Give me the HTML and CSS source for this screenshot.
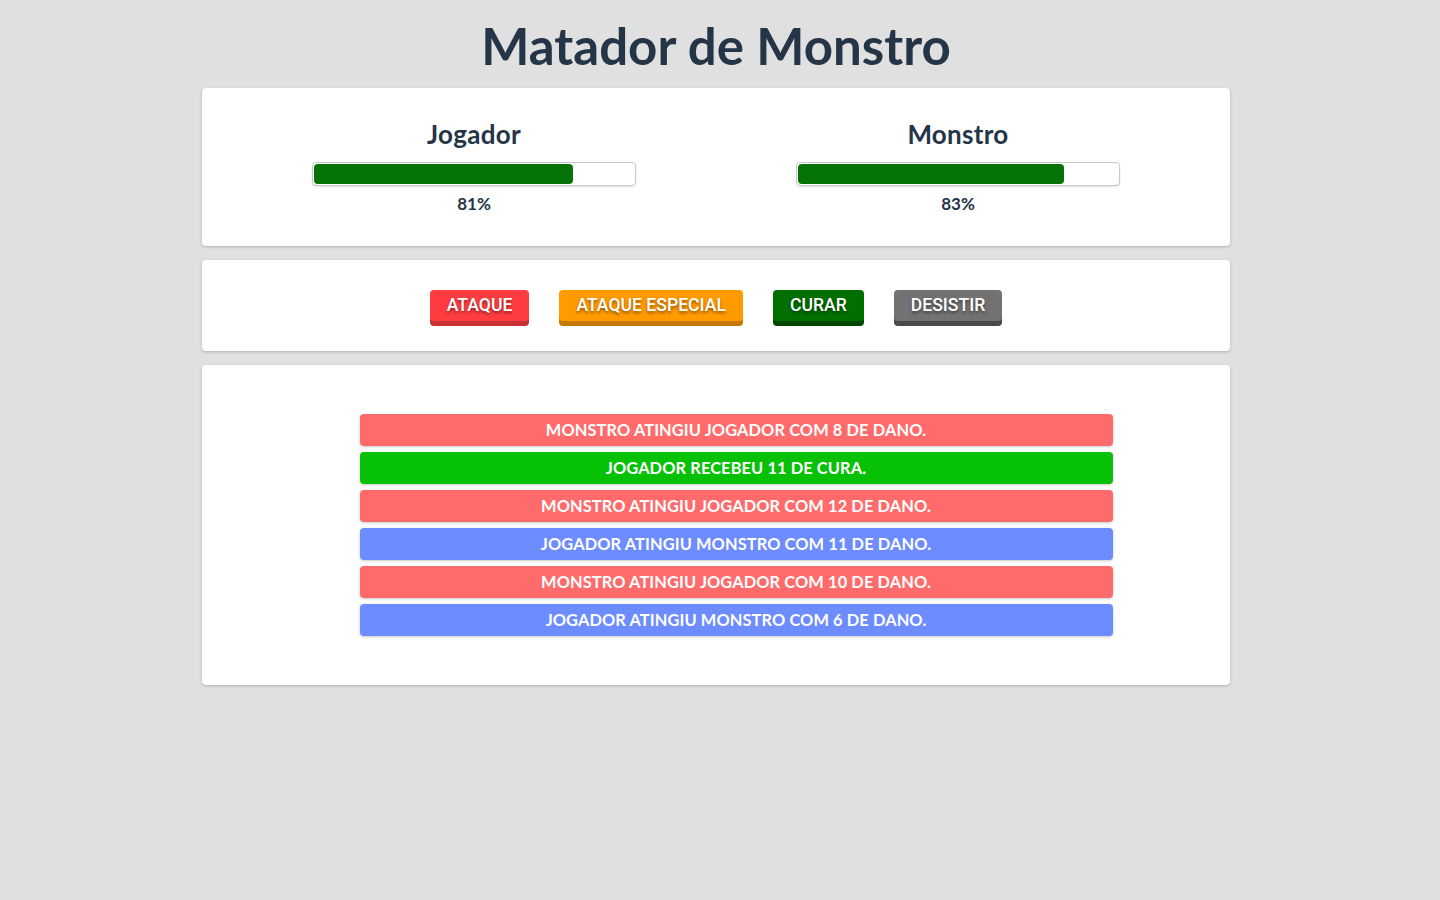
FILE: index.html
```html
<!DOCTYPE html>
<html lang="pt">
<head>
<meta charset="utf-8">
<title>Matador de Monstro</title>
<link rel="stylesheet" href="styles.css">
</head>
<body>
<h1 class="title">Matador de Monstro</h1>

<section class="card scores">
  <div class="score">
    <h2 class="score-name">Jogador</h2>
    <div class="bar"><div class="bar-fill" style="width: 81%"></div></div>
    <p class="score-value">81%</p>
  </div>
  <div class="score">
    <h2 class="score-name">Monstro</h2>
    <div class="bar"><div class="bar-fill" style="width: 83%"></div></div>
    <p class="score-value">83%</p>
  </div>
</section>

<section class="card actions">
  <button class="btn btn-attack">ATAQUE</button>
  <button class="btn btn-special">ATAQUE ESPECIAL</button>
  <button class="btn btn-heal">CURAR</button>
  <button class="btn btn-give-up">DESISTIR</button>
</section>

<section class="card logs">
  <ul class="log-list">
    <li class="log log-monster">MONSTRO ATINGIU JOGADOR COM 8 DE DANO.</li>
    <li class="log log-heal">JOGADOR RECEBEU 11 DE CURA.</li>
    <li class="log log-monster">MONSTRO ATINGIU JOGADOR COM 12 DE DANO.</li>
    <li class="log log-player">JOGADOR ATINGIU MONSTRO COM 11 DE DANO.</li>
    <li class="log log-monster">MONSTRO ATINGIU JOGADOR COM 10 DE DANO.</li>
    <li class="log log-player">JOGADOR ATINGIU MONSTRO COM 6 DE DANO.</li>
  </ul>
</section>
</body>
</html>
```

FILE: styles.css
```css
* { box-sizing: border-box; }

body {
  margin: 0;
  padding-right: 8px;
  background: #e0e0e0;
  font-family: Lato, "Noto Sans", sans-serif;
  color: #253548;
}

.title {
  margin: 18px 0 14px;
  text-align: center;
  font-size: 51px;
  font-weight: 700;
  line-height: 56px;
  color: #253548;
}

.card {
  width: 1028px;
  margin: 0 auto 14px;
  background: #fff;
  border-radius: 4px;
  box-shadow: 0 1px 3px rgba(0, 0, 0, 0.22);
}

.scores {
  display: flex;
  padding: 30px 30px 32px;
}

.score {
  flex: 1;
  display: flex;
  flex-direction: column;
  align-items: center;
}

.score-name {
  margin: 0 0 12px;
  font-size: 26px;
  line-height: 32px;
  font-weight: 700;
  letter-spacing: 0.3px;
}

.bar {
  width: 324px;
  height: 24px;
  padding: 1px;
  border: 1px solid #c8c8c8;
  border-radius: 4px;
  background: #fff;
  box-shadow: 0 1px 2px rgba(0, 0, 0, 0.12);
}

.bar-fill {
  height: 100%;
  background: #067306;
  border-radius: 4px;
}

.score-value {
  margin: 8px 0 0;
  font-size: 17px;
  line-height: 20px;
  font-weight: 700;
}

.actions {
  display: flex;
  justify-content: center;
  gap: 30px;
  padding: 30px 0;
}

.btn {
  height: 31px;
  padding: 0 17px;
  border: 0;
  border-radius: 4px;
  color: #fff;
  font-family: Roboto, "Liberation Sans", sans-serif;
  font-size: 17.6px;
  font-weight: 500;
  line-height: 29px;
  text-shadow: 0 2px 3px rgba(0, 0, 0, 0.45);
  cursor: pointer;
}

.btn-attack { background: #ff3d40; box-shadow: 0 5px 0 #c93034; }
.btn-special { background: #ff9a00; box-shadow: 0 5px 0 #c57805; }
.btn-heal { background: #006f00; box-shadow: 0 5px 0 #004800; }
.btn-give-up { background: #727272; box-shadow: 0 5px 0 #4a4a4a; }

.logs {
  padding: 49px 0;
}

.log-list {
  width: 793px;
  margin: 0 auto;
  padding: 0 0 0 40px;
  list-style: none;
  display: flex;
  flex-direction: column;
  gap: 6px;
}

.log {
  height: 32px;
  border-radius: 4px;
  color: #fff;
  text-align: center;
  font-size: 16.4px;
  font-weight: 700;
  letter-spacing: 0.1px;
  line-height: 32px;
  box-shadow: 0 1px 3px rgba(0, 0, 0, 0.22);
}

.log-monster { background: #ff6b6b; }
.log-heal { background: #07c107; }
.log-player { background: #6d8cff; }
```
